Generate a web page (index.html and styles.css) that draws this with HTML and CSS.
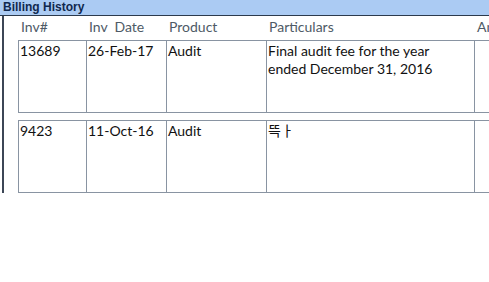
FILE: index.html
```html
<!DOCTYPE html>
<html lang="en">
<head>
  <meta charset="UTF-8">
  <meta name="viewport" content="width=device-width, initial-scale=1">
  <title>Billing History</title>
  <link rel="stylesheet" href="styles.css">
</head>
<body>
  <div class="titlebar">Billing History</div>

  <div class="panel">
    <div class="head-row">
      <div>Inv#</div>
      <div>Inv&nbsp; Date</div>
      <div>Product</div>
      <div>Particulars</div>
      <div>Amount</div>
    </div>

    <div class="bill-row">
      <div class="cell">13689</div>
      <div class="cell">26-Feb-17</div>
      <div class="cell">Audit</div>
      <div class="cell">Final audit fee for the year<br>ended December 31, 2016</div>
      <div class="cell"></div>
    </div>

    <div class="bill-row">
      <div class="cell">9423</div>
      <div class="cell">11-Oct-16</div>
      <div class="cell">Audit</div>
      <div class="cell">뜩ㅏ</div>
      <div class="cell"></div>
    </div>
  </div>
</body>
</html>
```

FILE: styles.css
```css
body {
  margin: 0;
  background: #fff;
  font-family: Lato, "Noto Sans CJK KR", sans-serif;
  font-size: 14px;
  color: #111;
  overflow: hidden;
}

.titlebar {
  height: 15px;
  border-bottom: 1px solid #2c3a4c;
  background: #abcbf3;
  color: #10284e;
  font-family: "Liberation Sans", sans-serif;
  font-weight: bold;
  font-size: 12px;
  line-height: 15px;
  padding-left: 3px;
}

.panel {
  margin-left: 2px;
  border-left: 2px solid #3c4656;
  padding-left: 14px;
  height: 177px;
  width: 700px;
}

.head-row,
.bill-row {
  display: grid;
  grid-template-columns: 68px 80px 100px 208px 150px;
}

.head-row {
  height: 24px;
  color: #4e5a66;
  line-height: 18px;
  padding-top: 2px;
  box-sizing: border-box;
}

.head-row div {
  padding-left: 3px;
}

.bill-row {
  height: 73px;
  box-sizing: border-box;
  border-top: 1px solid #8994a2;
  border-bottom: 1px solid #8994a2;
}

.bill-row + .bill-row {
  margin-top: 7px;
}

.cell {
  border-left: 1px solid #8994a2;
  padding: 1px 2px 0 1px;
  line-height: 18px;
}
```
